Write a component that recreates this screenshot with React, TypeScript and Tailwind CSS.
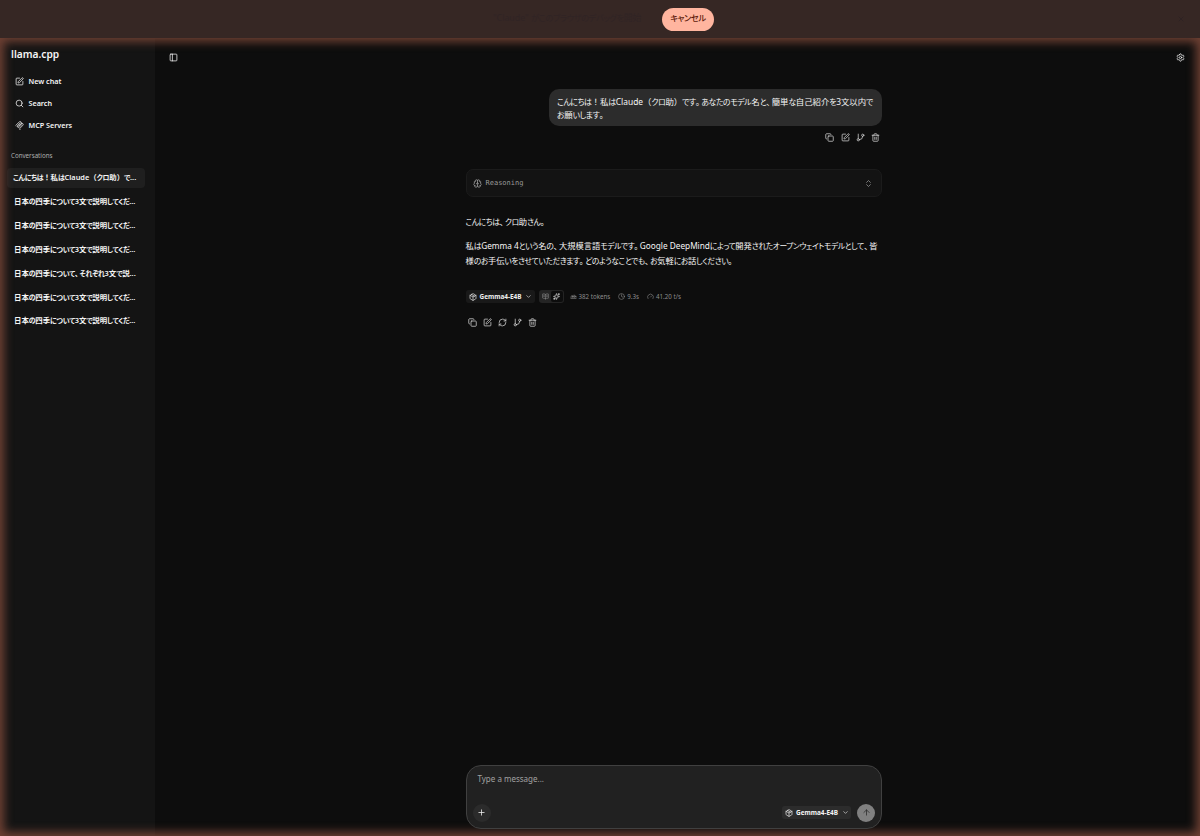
import {
  ArrowUp,
  Brain,
  BookOpenText,
  ChevronDown,
  ChevronsUpDown,
  Clock,
  Copy,
  Gauge,
  GitBranch,
  Package,
  PanelLeft,
  Plus,
  RefreshCw,
  Search,
  Settings,
  Sparkles,
  SquarePen,
  Trash2,
  WholeWord,
  X,
} from "lucide-react";

const conversations = [
  "こんにちは！私はClaude（クロ助）で...",
  "日本の四季について3文で説明してくだ...",
  "日本の四季について3文で説明してくだ...",
  "日本の四季について3文で説明してくだ...",
  "日本の四季について、それぞれ3文で説...",
  "日本の四季について3文で説明してくだ...",
  "日本の四季について3文で説明してくだ...",
];

// Kana is smaller and tighter than kanji, commas and full stops lose part of their box.
function Mixed({ text }: { text: string }) {
  return (
    <>
      {text.split(/([ぁ-んァ-ヶー]+|[、。])/).map((part, index) => {
        if (index % 2 === 0) return part;
        return /[、。]/.test(part) ? (
          <span key={index} className="tracking-[-0.34em]">
            {part}
          </span>
        ) : (
          <span
            key={index}
            className="text-[0.94em] leading-none tracking-[-0.05em] [font-feature-settings:'palt']"
          >
            {part}
          </span>
        );
      })}
    </>
  );
}

function McpIcon() {
  return (
    <svg
      className="size-[9px]"
      viewBox="0 0 174 174"
      fill="none"
      stroke="currentColor"
      strokeWidth="14"
      strokeLinecap="round"
    >
      <path d="M15 84.9 82.9 17a24 24 0 0 1 33.9 33.9L65.6 102.2" />
      <path d="m66.3 101.5 50.5-50.6a24 24 0 0 1 34 0l.3.4a24 24 0 0 1 0 33.9l-61.4 61.4a8 8 0 0 0 0 11.3l12.6 12.6" />
      <path d="M99.9 33.9 49.6 84.2a24 24 0 0 0 34 33.9l50.2-50.2" />
    </svg>
  );
}

function ModelButton() {
  return (
    <button className="flex h-[13px] w-[69px] items-center rounded-[3px] bg-white/5 pl-[3px] text-[6.4px] font-bold">
      <Package className="mr-[3px] size-[8px]" />
      <span>Gemma4-E4B</span>
      <ChevronDown className="ml-1 size-[7px]" />
    </button>
  );
}

function Banner() {
  return (
    <div className="flex h-[38px] shrink-0 items-center bg-[#362724] pl-[493px] pr-[15px]">
      <span className="w-[169px] whitespace-nowrap text-[8.8px] text-[#302425]">
        <Mixed text={'"Claude" がこのブラウザのデバッグを開始'} />
      </span>
      <button className="h-[23px] w-[52px] rounded-full bg-[#ffb59f] text-[8.8px] font-medium text-[#5c1b0b]">
        <Mixed text="キャンセル" />
      </button>
      <X className="ml-auto size-[8px] text-[#2b2022]" />
    </div>
  );
}

function Sidebar() {
  return (
    <aside className="flex w-[155px] shrink-0 flex-col bg-[#141414] pl-[11px] pt-[8px]">
      <h1 className="h-[16px] text-[10.2px] font-semibold leading-[16px]">llama.cpp</h1>
      <nav className="mt-[9px] flex flex-col text-[7.2px] font-semibold">
        <a className="flex h-[21.7px] items-center gap-[4.5px] pl-1">
          <SquarePen className="size-[9px]" />
          New chat
        </a>
        <a className="flex h-[21.7px] items-center gap-[4.5px] pl-1">
          <Search className="size-[9px]" />
          Search
        </a>
        <a className="flex h-[21.7px] items-center gap-[4.5px] pl-1">
          <McpIcon />
          MCP Servers
        </a>
      </nav>
      <p className="mt-[14px] h-[12px] text-[6.2px] leading-[12px] text-[#b0b0b0]">
        Conversations
      </p>
      <div className="-ml-1 mt-[5.6px] flex w-[138px] flex-col">
        {conversations.map((title, index) => (
          <div
            key={index}
            className={`mb-[3.9px] flex h-[20px] items-center whitespace-nowrap rounded-[4px] text-[7.4px] font-semibold ${
              index === 0 ? "bg-[#1f1f1f] pl-[6px]" : "pl-[7px]"
            }`}
          >
            <p>
              <Mixed text={title} />
            </p>
          </div>
        ))}
      </div>
    </aside>
  );
}

function Chat() {
  return (
    <div className="ml-[310.5px] flex w-[416.5px] flex-1 flex-col">
      <div className="ml-auto mt-[21px] h-[37px] w-[333px] whitespace-nowrap rounded-[10px] bg-[#2c2c2c] pl-2 pt-[5.5px] text-[8.4px] leading-[13px]">
        <p className="h-[13px]">
          <Mixed text="こんにちは！私はClaude（クロ助）です。あなたのモデル名と、簡単な自己紹介を3文以内で" />
        </p>
        <p className="h-[13px]">
          <Mixed text="お願いします。" />
        </p>
      </div>
      <div className="mt-[6.5px] flex justify-end gap-[6.2px] pr-[2px] text-[#d4d4d4]">
        <Copy className="size-[9px]" />
        <SquarePen className="size-[9px]" />
        <GitBranch className="size-[9px]" />
        <Trash2 className="size-[9px]" />
      </div>

      <div className="mt-[27.5px] flex h-[28px] items-center rounded-[7px] border border-[#1b1b1b] bg-[#131313] px-[6px] text-[#999]">
        <Brain className="size-[9px]" />
        <span className="ml-1 font-['DejaVu_Sans_Mono',monospace] text-[7px]">Reasoning</span>
        <ChevronsUpDown className="ml-auto mr-[2px] size-[9px]" />
      </div>

      <div className="mt-[17px] whitespace-nowrap text-[8.25px] leading-[15px]">
        <p className="h-[15px]">
          <Mixed text="こんにちは、クロ助さん。" />
        </p>
        <p className="mt-[9px] h-[15px]">
          <Mixed text="私はGemma 4という名の、大規模言語モデルです。Google DeepMindによって開発されたオープンウェイトモデルとして、皆" />
        </p>
        <p className="h-[15px]">
          <Mixed text="様のお手伝いをさせていただきます。どのようなことでも、お気軽にお話しください。" />
        </p>
      </div>

      <div className="mt-[22px] flex h-[13px] items-center text-[6.2px] text-[#8c8c8c]">
        <div className="text-[#f0f0f0]">
          <ModelButton />
        </div>
        <div className="ml-1 flex h-[13px] w-[25px] items-center justify-between rounded-[3px] bg-[#242424] p-[1px]">
          <BookOpenText className="ml-[2px] size-[7px]" />
          <span className="flex h-[11px] w-[12px] items-center justify-center rounded-[2px] bg-[#0d0d0d] text-white">
            <Sparkles className="size-[7px]" />
          </span>
        </div>
        <WholeWord className="ml-[6px] mr-[2px] size-[7px]" />
        382 tokens
        <Clock className="ml-[8px] mr-[2px] size-[7px]" />
        9.3s
        <Gauge className="ml-[8px] mr-[2px] size-[7px]" />
        41.20 t/s
      </div>
      <div className="mt-[15px] flex gap-[6.2px] pl-[2px] text-[#d4d4d4]">
        <Copy className="size-[9px]" />
        <SquarePen className="size-[9px]" />
        <RefreshCw className="size-[9px]" />
        <GitBranch className="size-[9px]" />
        <Trash2 className="size-[9px]" />
      </div>

      <div className="relative z-10 mb-[7.5px] mt-auto flex h-[64px] flex-col justify-between rounded-[15px] border border-[#404040] bg-[#212121] px-[6px] pb-[6px] pt-[6px]">
        <p className="pl-[5px] text-[8px] leading-[13px] text-[#a1a1a1]">Type a message...</p>
        <div className="flex items-center">
          <button className="flex size-[18px] items-center justify-center rounded-full bg-[#2b2b2b]">
            <Plus className="size-[9px]" />
          </button>
          <div className="ml-auto mr-[6px]">
            <ModelButton />
          </div>
          <button className="flex size-[18px] items-center justify-center rounded-full bg-[#808080] text-[#282828]">
            <ArrowUp className="size-[9px]" />
          </button>
        </div>
      </div>
    </div>
  );
}

export default function App() {
  return (
    <div className="flex h-[836px] w-[1200px] flex-col overflow-hidden bg-[#0d0d0d] font-['Noto_Sans','Noto_Sans_CJK_JP',sans-serif] text-[#f5f5f5]">
      <Banner />
      <div className="relative flex min-h-0 flex-1">
        <Sidebar />
        <main className="flex flex-1 flex-col">
          <header className="flex h-[30px] items-end justify-between pl-[14px] pr-[15px]">
            <PanelLeft className="mb-[6px] size-[9px]" />
            <Settings className="mb-[6px] size-[9px]" />
          </header>
          <Chat />
        </main>
        <div className="pointer-events-none absolute inset-0 shadow-[inset_0_0_10px_4px_#6e4033]" />
      </div>
    </div>
  );
}
